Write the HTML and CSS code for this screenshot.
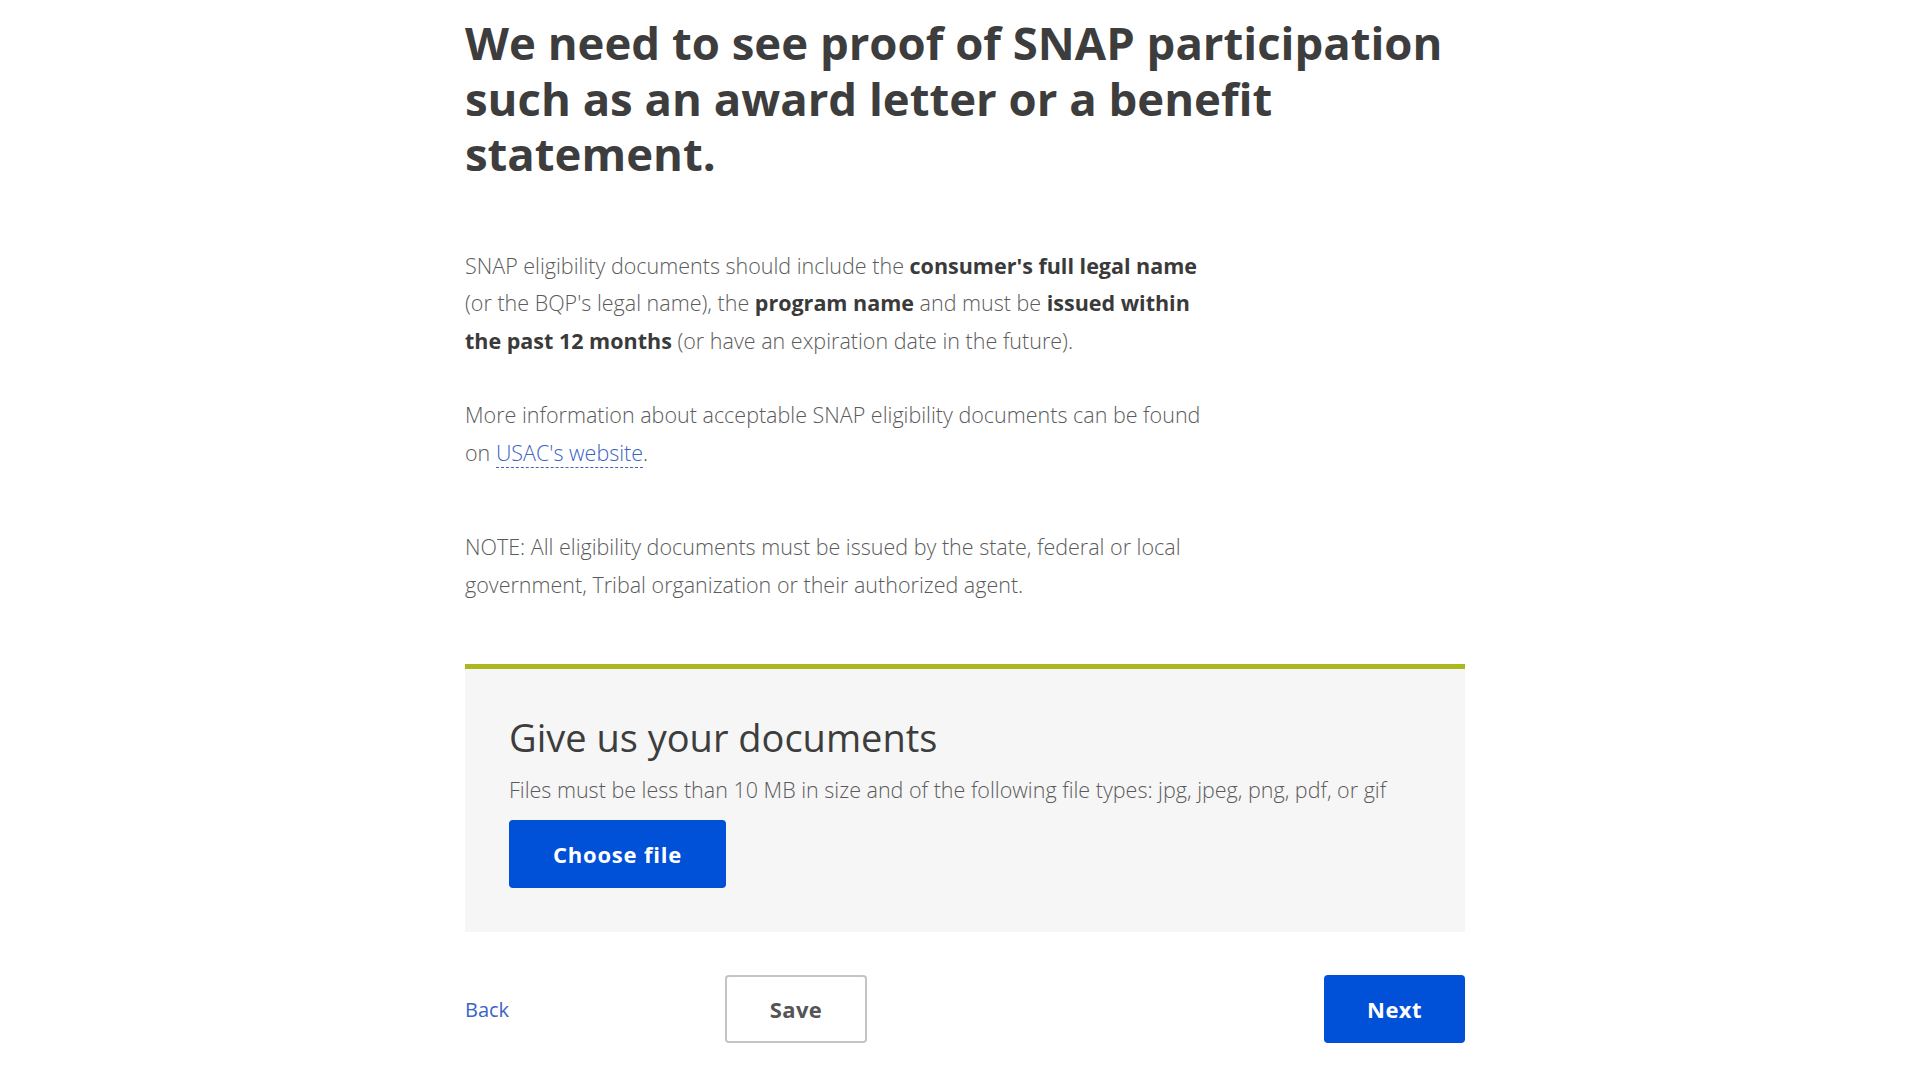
FILE: index.html
```html
<!DOCTYPE html>
<html lang="en">
<head>
    <meta charset="UTF-8">
    <meta name="viewport" content="width=device-width, initial-scale=1.0">
    <title>Proof of SNAP participation</title>
    <link rel="stylesheet" href="styles.css">
</head>
<body>
    <main class="page">
        <h1 class="page-title">We need to see proof of SNAP participation such as an award letter or a benefit statement.</h1>

        <p class="copy">SNAP eligibility documents should include the <strong>consumer's full legal name</strong> (or the BQP's legal name), the <strong>program name</strong> and must be <strong>issued within the past 12 months</strong> (or have an expiration date in the future).</p>

        <p class="copy">More information about acceptable SNAP eligibility documents can be found on <a href="#" class="link">USAC's website</a>.</p>

        <p class="copy note">NOTE: All eligibility documents must be issued by the state, federal or local government, Tribal organization or their authorized agent.</p>

        <section class="upload">
            <h2 class="upload-title">Give us your documents</h2>
            <p class="upload-hint">Files must be less than 10 MB in size and of the following file types: jpg, jpeg, png, pdf, or gif</p>
            <button type="button" class="btn btn-primary choose">Choose file</button>
        </section>

        <nav class="form-nav">
            <a href="#" class="link back">Back</a>
            <button type="button" class="btn btn-outline">Save</button>
            <button type="button" class="btn btn-primary next">Next</button>
        </nav>
    </main>
</body>
</html>
```

FILE: styles.css
```css
body {
    margin: 0;
    background-color: #fff;
    font-family: "Open Sans", Lato, sans-serif;
    color: #5b5b5b;
}
.page {
    width: 1000px;
    margin: 0 0 0 calc(50% - 495px);
    padding: 15px 0 40px;
}
.page-title {
    margin: 0 0 65px;
    font-size: 45.5px;
    line-height: 55.5px;
    font-weight: 700;
    color: #3d3d3d;
}
.copy {
    max-width: 750px;
    margin: 0 0 37px;
    font-size: 21.5px;
    line-height: 37.5px;
    font-weight: 300;
}
.copy strong {
    font-weight: 700;
    color: #3a3a3a;
}
.note {
    margin-top: 57px;
    margin-bottom: 61px;
}
.link {
    color: #3b63c4;
    text-decoration: none;
    border-bottom: 1px dashed #3b63c4;
}
.upload {
    background-color: #f6f6f6;
    border-top: 5px solid #aab820;
    padding: 44px;
}
.upload-title {
    margin: 0;
    font-size: 38px;
    line-height: 48px;
    font-weight: 400;
    color: #3d3d3d;
}
.upload-hint {
    margin: 12px 0 14px;
    font-size: 21.5px;
    line-height: 33px;
    font-weight: 300;
}
.btn {
    height: 68px;
    padding: 0;
    border-radius: 4px;
    font-family: "Open Sans", Lato, sans-serif;
    font-size: 22px;
    font-weight: 700;
    letter-spacing: 0.4px;
    cursor: pointer;
}
.btn-primary {
    background-color: #0050d8;
    border: none;
    color: #fff;
}
.choose {
    width: 217px;
    letter-spacing: 0.8px;
}
.btn-outline {
    width: 142px;
    background-color: #fff;
    border: 2px solid #c4c4c4;
    color: #555;
}
.form-nav {
    display: flex;
    align-items: center;
    margin-top: 43px;
}
.back {
    width: 260px;
    border-bottom: none;
    font-size: 20px;
}
.next {
    width: 141px;
    margin-left: auto;
}
```
